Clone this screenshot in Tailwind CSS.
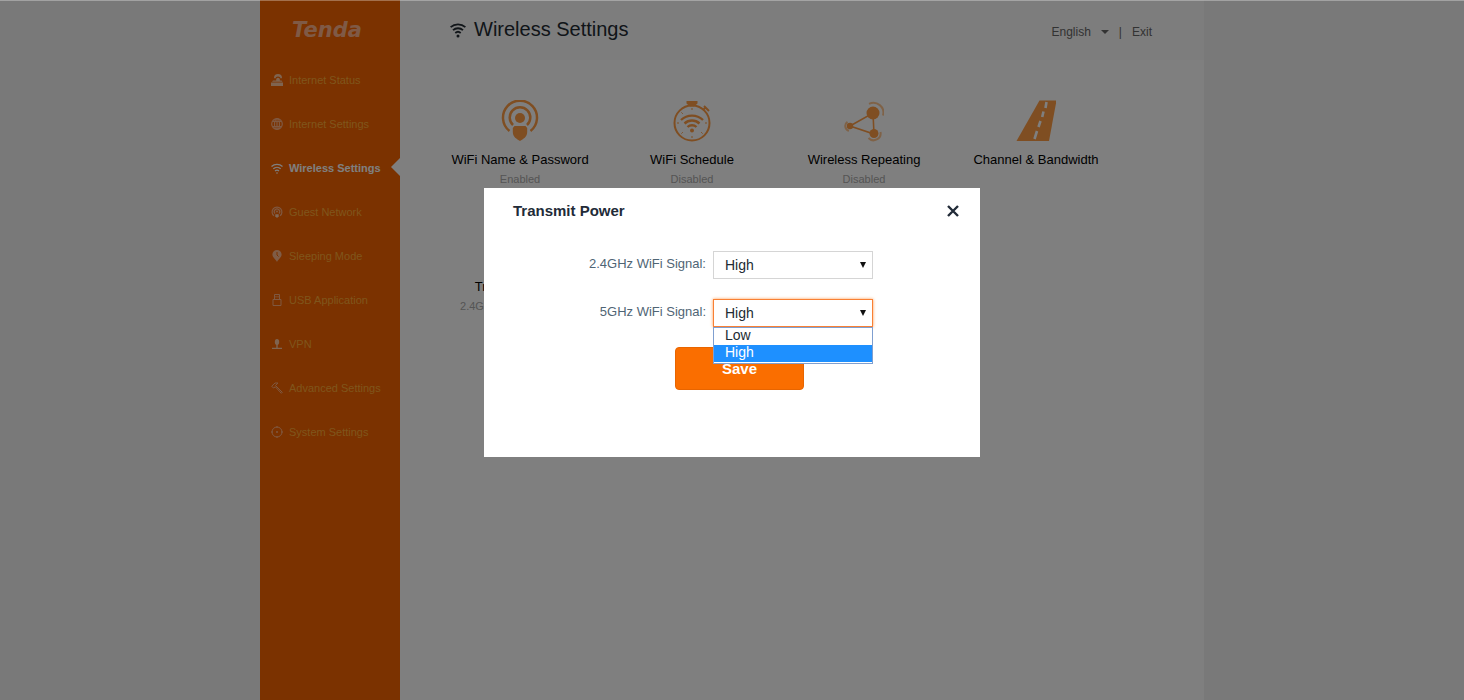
<!DOCTYPE html>
<html lang="en">
<head>
    <meta charset="UTF-8">
    <meta name="viewport" content="width=device-width, initial-scale=1.0">
    <title>Tenda | Wireless Settings</title>
    <script src="https://cdn.jsdelivr.net/npm/@tailwindcss/browser@4"></script>
</head>
<body class="bg-[#f2f2f2] font-['Liberation_Sans',Arial,sans-serif] text-black">
    <div class="mx-auto flex min-h-screen max-w-[944px]">

        <!-- Sidebar -->
        <aside class="w-[140px] shrink-0 bg-[#f66400]">
            <div class="pl-8 pt-[18px] font-['DejaVu_Sans',sans-serif] text-[21px] leading-6 font-bold italic text-[#ffb48c]">Tenda</div>
            <nav class="pt-4 text-[11px] text-[#ffab38]">
                <a href="#" class="flex h-11 items-center gap-1.5 pl-[11px]">
                    <svg class="size-3 text-[#ffc8a0]" viewBox="0 0 12 12" fill="currentColor"><path d="M0 8.500h12V12H0zM2 6.500h8.500l1 1.200H1zM3 4a4 4 0 0 1 8 0l-1.200.5a3 3 0 0 0-5.600 0zM5.200 5a2 2 0 0 1 3.600 0v1.500H5.200z"/></svg>
                    Internet Status
                </a>
                <a href="#" class="flex h-11 items-center gap-1.5 pl-[11px]">
                    <svg class="size-3 text-[#ffb080]" viewBox="0 0 12 12" fill="none" stroke="currentColor" stroke-width="1.200"><circle cx="6" cy="6" r="5.300"/><ellipse cx="6" cy="6" rx="2.500" ry="5.300"/><path d="M6 1v10M1.500 3.500h9M1.500 8.500h9"/></svg>
                    Internet Settings
                </a>
                <a href="#" class="relative flex h-11 items-center gap-1.5 pl-[11px] font-bold text-white">
                    <svg class="size-3" viewBox="0 0 12 12" fill="none" stroke="currentColor" stroke-width="1.200"><path d="M.5 4.500a8 8 0 0 1 11 0M2.300 6.800a5.400 5.400 0 0 1 7.400 0M4 9a3 3 0 0 1 4 0"/><circle cx="6" cy="11" r=".8" fill="currentColor" stroke="none"/></svg>
                    <span class="whitespace-nowrap">Wireless Settings</span>
                    <svg class="absolute top-3 right-0 h-[18px] w-[9px]" viewBox="0 0 9 18" fill="white"><path d="M9 0v18L0 9z"/></svg>
                </a>
                <a href="#" class="flex h-11 items-center gap-1.5 pl-[11px]">
                    <svg class="size-3 text-[#ffb080]" viewBox="0 0 12 12" fill="none" stroke="currentColor" stroke-width="1.200"><path d="M3 9.800a4.900 4.900 0 1 1 6 0M4 7.500a2.700 2.700 0 1 1 4 0"/><circle cx="6" cy="5.600" r="1" fill="currentColor" stroke="none"/><path d="M4.300 8.200h3.400v2.100L6 12l-1.700-1.700z" fill="#ffd0b0" stroke="none"/></svg>
                    Guest Network
                </a>
                <a href="#" class="flex h-11 items-center gap-1.5 pl-[11px]">
                    <svg class="size-3" viewBox="0 0 12 12"><path d="M6 0a4.600 4.600 0 0 1 4.600 4.600C10.600 7.500 7.500 9 6 12 4.500 9 1.400 7.500 1.400 4.600A4.600 4.600 0 0 1 6 0z" fill="#ffb88c"/><path d="M6 2v3l1.500 1.500" fill="none" stroke="#f66400"/></svg>
                    Sleeping Mode
                </a>
                <a href="#" class="flex h-11 items-center gap-1.5 pl-[11px]">
                    <svg class="size-3 text-[#ffb080]" viewBox="0 0 12 12" fill="none" stroke="currentColor"><path d="M2 5.500h8v6H2zM3.500 5.500v-5h5v5M5 2v1.500M7 2v1.500"/></svg>
                    USB Application
                </a>
                <a href="#" class="flex h-11 items-center gap-1.5 pl-[11px]">
                    <svg class="size-3 text-[#ffc8a0]" viewBox="0 0 12 12" fill="currentColor"><ellipse cx="6" cy="4" rx="2.200" ry="3"/><path d="M5.300 6h1.400v3.800H11V11H1V9.800h4.300z"/></svg>
                    VPN
                </a>
                <a href="#" class="flex h-11 items-center gap-1.5 pl-[11px]">
                    <svg class="size-3 text-[#ffb080]" viewBox="0 0 12 12" fill="none" stroke="currentColor"><path d="M.7 4.200 4 1h3L4.500 3.500l6.800 6.800-1 1-6-6.500L2.500 6z"/></svg>
                    <span class="whitespace-nowrap">Advanced Settings</span>
                </a>
                <a href="#" class="flex h-11 items-center gap-1.5 pl-[11px]">
                    <svg class="size-3 text-[#ffb080]" viewBox="0 0 12 12" fill="none" stroke="currentColor"><circle cx="6" cy="6" r="5"/><circle cx="6" cy="6" r="1" fill="currentColor" stroke="none"/><path d="M6 0v2M6 10v2M0 6h2M10 6h2"/></svg>
                    System Settings
                </a>
            </nav>
        </aside>

        <!-- Content -->
        <main class="min-w-0 grow bg-white">
            <header class="flex h-[60px] items-center justify-between bg-[#fafafa] pr-[52px] pl-[50px]">
                <h1 class="flex items-center gap-2 pb-0.5 text-xl text-[#222b33]">
                    <svg class="mt-0.5 size-4" viewBox="0 0 16 16" fill="none" stroke="currentColor" stroke-width="1.800"><path d="M.6 5.200a11 11 0 0 1 14.800 0M3 8.200a7.400 7.400 0 0 1 10 0M5.300 11a4 4 0 0 1 5.400 0"/><circle cx="8" cy="14" r="1.500" fill="currentColor" stroke="none"/></svg>
                    Wireless Settings
                </h1>
                <div class="flex items-center gap-2.5 pt-1 text-xs text-[#666]">
                    <button class="flex items-center gap-2.5">English
                        <svg class="h-1 w-2" viewBox="0 0 8 4" fill="currentColor"><path d="M0 0h8L4 4z"/></svg>
                    </button>
                    <span>|</span>
                    <a href="#">Exit</a>
                </div>
            </header>

            <div class="grid grid-cols-4 pt-10 pr-[82px] pl-[34px] text-center text-[13px] leading-5">
                <a href="#" class="flex h-[127px] flex-col items-center">
                    <svg class="h-[42px] w-10 text-[#ff9d45]" viewBox="0 0 40 42" fill="none" stroke="currentColor" stroke-width="2.500"><path d="M9.500 31A17 17 0 1 1 30.500 31"/><path d="M13 25a10.300 10.300 0 1 1 14 0"/><circle cx="20" cy="18" r="5" fill="currentColor" stroke="none"/><path d="M14.500 26h11l1.700 2v4c0 5-4 7-7.200 9-3.200-2-7.200-4-7.200-9v-4z" fill="currentColor" stroke="none"/></svg>
                    <span class="mt-2 whitespace-nowrap">WiFi Name &amp; Password</span>
                    <span class="text-[11px] leading-[18px] text-[#aaa]">Enabled</span>
                </a>
                <a href="#" class="flex h-[127px] flex-col items-center">
                    <svg class="h-[42px] w-10 text-[#ff9d45]" viewBox="0 0 40 42" fill="none" stroke="currentColor" stroke-width="2"><circle cx="20" cy="23" r="17.500"/><path d="M14.500 1h11v2.500L22 6.500h-4l-3.500-3z" fill="currentColor" stroke="none"/><path d="m31 10 3-3M32 6l5 5"/><path d="M20 8v2M20 36v2M5 23h2M33 23h2M9.400 12.400l1.400 1.400M9.400 33.600l1.400-1.400M30.600 33.600l-1.400-1.400" stroke-width="1"/><path d="M9 20a16 16 0 0 1 22 0M12.500 23.500a11 11 0 0 1 15 0M15.500 27a6.500 6.500 0 0 1 9 0" stroke-width="2.400"/><circle cx="20" cy="30.500" r="2" fill="currentColor" stroke="none"/></svg>
                    <span class="mt-2 whitespace-nowrap">WiFi Schedule</span>
                    <span class="text-[11px] leading-[18px] text-[#aaa]">Disabled</span>
                </a>
                <a href="#" class="flex h-[127px] flex-col items-center">
                    <svg class="h-[42px] w-10 text-[#ff9d45]" viewBox="0 0 40 42" fill="none" stroke="currentColor" stroke-width="1.600"><path d="M6 26 29 13 30 34z"/><g fill="currentColor" stroke="none"><circle cx="29" cy="13" r="6.500"/><circle cx="30" cy="33.500" r="4.500"/><circle cx="6" cy="26" r="3.200"/></g><g stroke-opacity=".6" stroke-width="2"><path d="M25 3.800A10 10 0 0 1 39 15.500M36.500 32a7 7 0 0 1-12 6M3.500 21.800a5 5 0 0 0 1.500 9"/></g></svg>
                    <span class="mt-2 whitespace-nowrap">Wireless Repeating</span>
                    <span class="text-[11px] leading-[18px] text-[#aaa]">Disabled</span>
                </a>
                <a href="#" class="flex h-[127px] flex-col items-center">
                    <svg class="h-[42px] w-10" viewBox="0 0 40 42"><path d="M23.500.5H40.500l-7.500 40.500H.5z" fill="#ff9d45"/><path d="m30.500 2-1 6M27.500 11.500l-1.300 5.500M24.500 21l-2 6M21 31l-2.500 8" fill="none" stroke="white" stroke-width="2.600"/></svg>
                    <span class="mt-2 whitespace-nowrap">Channel &amp; Bandwidth</span>
                </a>
                <a href="#" class="flex h-[127px] flex-col items-center">
                    <svg class="h-[42px] w-10 text-[#ff9d45]" viewBox="0 0 40 42" fill="none" stroke="currentColor" stroke-width="2.500"><path d="M20 18v22M10 28a14 14 0 0 1 0-20M30 28a14 14 0 0 0 0-20"/><circle cx="20" cy="18" r="4" fill="currentColor"/></svg>
                    <span class="mt-2 whitespace-nowrap">Transmit Power</span>
                    <span class="text-[11px] leading-[18px] whitespace-nowrap text-[#aaa]">2.4GHz High 5GHz High</span>
                </a>
            </div>
        </main>
    </div>

    <!-- Dialog -->
    <div class="fixed inset-0 border-t border-white/30 bg-black/50 px-4">
        <section role="dialog" aria-labelledby="dialog-title" class="mx-auto mt-[187px] min-h-[269px] max-w-[496px] bg-white text-sm">
            <div class="flex items-center justify-between pt-[11px] pr-5 pl-[29px]">
                <h2 id="dialog-title" class="text-[15px] leading-6 font-bold text-[#222b38]">Transmit Power</h2>
                <button aria-label="Close">
                    <svg class="size-3.5" viewBox="0 0 14 14" fill="none" stroke="#222b38" stroke-width="2.400"><path d="m2 2 10 10M12 2 2 12"/></svg>
                </button>
            </div>
            <form class="pt-7">
                <div class="flex h-7 items-center">
                    <label for="signal24" class="w-[222px] pb-0.5 text-right text-[13px] text-[#4f6575]">2.4GHz WiFi Signal:</label>
                    <div class="relative ml-[7px] w-40">
                        <select id="signal24" class="h-7 w-full appearance-none border border-[#d5d5d5] bg-white pl-[11px] text-[#222b33]">
                            <option>Low</option>
                            <option selected>High</option>
                        </select>
                        <svg class="pointer-events-none absolute top-[11px] right-[7px] h-[6px] w-[6px]" viewBox="0 0 6 6"><path d="M0 0h6L3 6z" fill="#111"/></svg>
                    </div>
                </div>
                <div class="mt-5 flex h-7 items-center">
                    <label for="signal5" class="w-[222px] pb-0.5 text-right text-[13px] text-[#4f6575]">5GHz WiFi Signal:</label>
                    <div class="relative ml-[7px] w-40">
                        <select id="signal5" class="h-7 w-full appearance-none border border-[#f98034] bg-white pl-[11px] text-[#222b33] shadow-[0_0_3px_#ff9a4d]">
                            <option>Low</option>
                            <option selected>High</option>
                        </select>
                        <svg class="pointer-events-none absolute top-[11px] right-[7px] h-[6px] w-[6px]" viewBox="0 0 6 6"><path d="M0 0h6L3 6z" fill="#111"/></svg>
                        <ul class="absolute top-7 left-0 w-full border border-[#7f9fd0] bg-white pb-px leading-[15px] text-[#222b33]">
                            <li class="pb-0.5 pl-[11px]">Low</li>
                            <li class="bg-[#1e90ff] pb-0.5 pl-[11px] text-white">High</li>
                        </ul>
                    </div>
                </div>
                <button type="submit" class="mt-5 ml-[191px] block h-[43px] w-[129px] rounded border border-[#e86500] bg-[#fa6e00] text-[15px] font-bold text-white">Save</button>
            </form>
        </section>
    </div>
</body>
</html>
